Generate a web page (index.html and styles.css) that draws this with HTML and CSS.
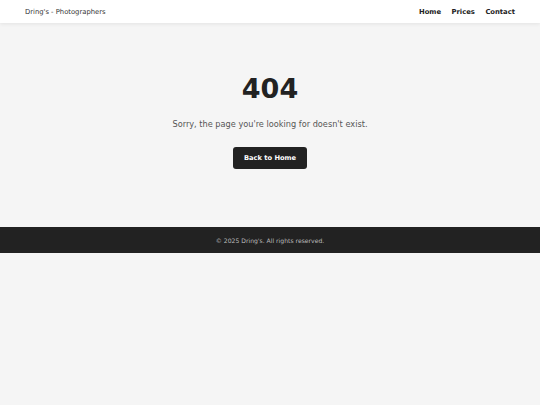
FILE: index.html
```html
<!DOCTYPE html>
<html>
<head>
<meta charset="utf-8">
<link rel="stylesheet" href="styles.css">
</head>
<body>
<header class="site-header">
  <div class="brand">Dring's - Photographers</div>
  <nav class="nav">
    <a href="#">Home</a>
    <a href="#">Prices</a>
    <a href="#">Contact</a>
  </nav>
</header>
<main class="content">
  <h1 class="code">404</h1>
  <p class="message">Sorry, the page you're looking for doesn't exist.</p>
  <a class="btn" href="#">Back to Home</a>
</main>
<footer class="site-footer">© 2025 Dring's. All rights reserved.</footer>
</body>
</html>
```
FILE: styles.css
```css
* { box-sizing: border-box; }
html, body { margin: 0; padding: 0; }
body {
  background: #f5f5f5;
  font-family: "DejaVu Sans", sans-serif;
  color: #222;
}
.site-header {
  height: 23px;
  background: #fff;
  box-shadow: 0 1px 4px rgba(0,0,0,0.08);
  display: flex;
  align-items: center;
  justify-content: space-between;
  padding: 0 25px;
  position: relative;
}
.brand { font-size: 6.8px; color: #333; }
.nav { display: flex; gap: 10.5px; }
.nav a { font-size: 6.8px; font-weight: bold; color: #222; text-decoration: none; }
.content {
  height: 204px;
  display: flex;
  flex-direction: column;
  align-items: center;
  padding-top: 50px;
}
.code {
  margin: 0;
  font-size: 27px;
  line-height: 32px;
  font-weight: bold;
  color: #222;
}
.message {
  margin: 13px 0 0;
  font-size: 8.2px;
  line-height: 12px;
  color: #555;
}
.btn {
  margin-top: 17px;
  display: inline-block;
  background: #222;
  color: #fff;
  font-size: 6.7px;
  font-weight: bold;
  text-decoration: none;
  width: 74px;
  height: 22px;
  line-height: 22px;
  text-align: center;
  border-radius: 3px;
}
.site-footer {
  height: 26px;
  background: #222;
  color: #bbb;
  font-size: 6.1px;
  display: flex;
  align-items: center;
  justify-content: center;
}
```
